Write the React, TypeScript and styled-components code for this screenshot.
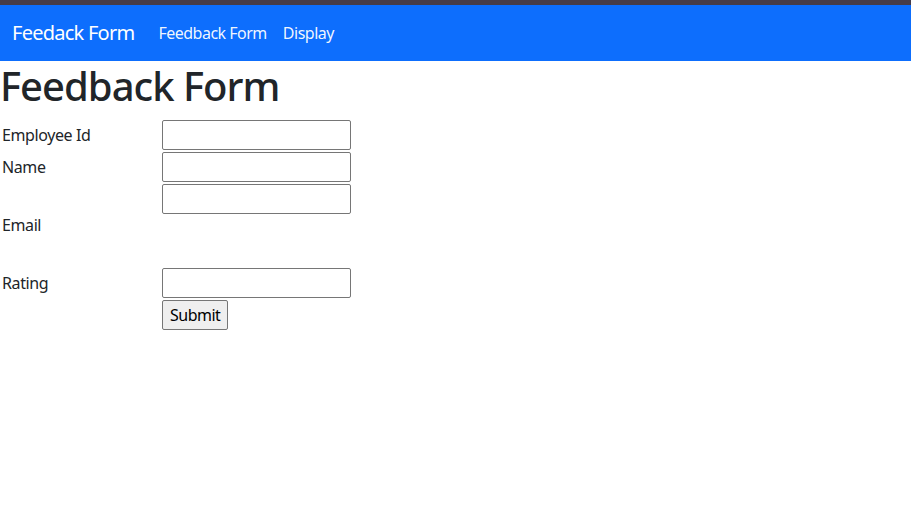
import styled, { createGlobalStyle } from 'styled-components';

const GlobalStyle = createGlobalStyle`
  html, body {
    margin: 0;
    padding: 0;
    background: #fff;
  }
  body {
    font-family: 'Noto Sans', 'Open Sans', sans-serif;
    font-size: 16px;
    line-height: 1.5;
    letter-spacing: -0.4px;
    color: #212529;
  }
`;

const Page = styled.div`
  min-height: 517px;
  border-top: 5px solid #463c48;
`;

const Navbar = styled.nav`
  display: flex;
  align-items: center;
  height: 56px;
  padding: 8px 12px;
  box-sizing: border-box;
  background: #0d6efd;
`;

const Brand = styled.a`
  font-size: 20px;
  line-height: 30px;
  letter-spacing: -0.75px;
  color: #fff;
  margin-right: 16px;
  text-decoration: none;
`;

const NavLink = styled.a`
  padding: 8px;
  letter-spacing: -0.5px;
  color: rgba(255, 255, 255, 0.95);
  text-decoration: none;
`;

const Heading = styled.h1`
  margin: 0 0 8px;
  padding-top: 1px;
  font-size: 40px;
  line-height: 48px;
  font-weight: 500;
  letter-spacing: -1px;
`;

const FormTable = styled.table`
  border-spacing: 2px;
`;

const LabelCell = styled.td`
  width: 158px;
  padding: 0;
  vertical-align: middle;
`;

const FieldCell = styled.td<{ $tall?: boolean }>`
  padding: 0;
  vertical-align: top;
  height: ${(p) => (p.$tall ? '82px' : '30px')};
`;

const Input = styled.input`
  display: block;
  width: 189px;
  height: 30px;
  box-sizing: border-box;
  border: 1px solid #767676;
  border-radius: 2px;
  font: inherit;
  padding: 1px 2px;
`;

const SubmitButton = styled.button`
  height: 30px;
  padding: 0 7px;
  font: inherit;
  letter-spacing: -0.5px;
  color: #000;
  background: #efefef;
  border: 1px solid #767676;
  border-radius: 2px;
`;

export default function App() {
  return (
    <Page>
      <GlobalStyle />
      <Navbar>
        <Brand>Feedack Form</Brand>
        <NavLink>Feedback Form</NavLink>
        <NavLink>Display</NavLink>
      </Navbar>
      <Heading>Feedback Form</Heading>
      <FormTable>
        <tbody>
          <tr>
            <LabelCell>Employee Id</LabelCell>
            <FieldCell><Input /></FieldCell>
          </tr>
          <tr>
            <LabelCell>Name</LabelCell>
            <FieldCell><Input /></FieldCell>
          </tr>
          <tr>
            <LabelCell>Email</LabelCell>
            <FieldCell $tall><Input /></FieldCell>
          </tr>
          <tr>
            <LabelCell>Rating</LabelCell>
            <FieldCell><Input /></FieldCell>
          </tr>
          <tr>
            <LabelCell />
            <FieldCell><SubmitButton>Submit</SubmitButton></FieldCell>
          </tr>
        </tbody>
      </FormTable>
    </Page>
  );
}
